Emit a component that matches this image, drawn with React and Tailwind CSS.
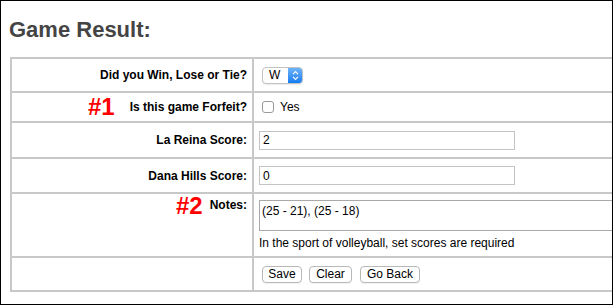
export default function App() {
  const line = 'border-[#c8c8c8]';
  const labelCell = 'w-[242px] shrink-0 border-r-2 border-[#c8c8c8] flex justify-end pr-[5px] text-[12px] leading-[14px] font-bold text-black';

  return (
    <div className="w-[613px] h-[305px] border border-black overflow-hidden bg-white font-['Liberation_Sans',Arial,sans-serif]">
      <h2 className="ml-[8px] mt-[16px] text-[22px] leading-[25px] font-bold text-[#444]">Game Result:</h2>

      {/* Result table, runs off the right edge */}
      <div className={`ml-[9px] mt-[15px] w-[700px] border-l-2 border-t-2 ${line}`}>
        <div className={`flex h-[34px] border-b-2 ${line}`}>
          <div className={`${labelCell} items-center`}>Did you Win, Lose or Tie?</div>
          <div className="flex-1 flex items-center pl-[5px]">
            <div className="ml-[3px] flex h-[17px] w-[41px] rounded-[4px] border border-[#c3c3c3] bg-white overflow-hidden shadow-[0_1px_1px_rgba(0,0,0,0.08)]">
              <span className="flex-1 pl-[6px] text-[12px] leading-[15px] text-black">W</span>
              <span className="w-[14px] bg-linear-to-b from-[#6cb3fa] to-[#0f7cf2] flex items-center justify-center">
                <svg width="7" height="11" viewBox="0 0 7 11">
                  <path d="M1 4.2 L3.5 1.7 L6 4.2 M1 6.8 L3.5 9.3 L6 6.8" stroke="white" strokeWidth="1.2" fill="none" />
                </svg>
              </span>
            </div>
          </div>
        </div>

        <div className={`flex h-[30px] border-b-2 ${line}`}>
          <div className={`${labelCell} items-center`}>
            <span className="mr-[15px] text-[24px] leading-[24px] text-[#ff0000]">#1</span>
            Is this game Forfeit?
          </div>
          <div className="flex-1 flex items-center pl-[5px] text-[12px] text-black">
            <span className="ml-[3px] w-[12px] h-[12px] rounded-[3px] border border-[#9a9a9a] bg-white"></span>
            <span className="ml-[6px]">Yes</span>
          </div>
        </div>

        <div className={`flex h-[36px] border-b-2 ${line}`}>
          <div className={`${labelCell} items-center`}>La Reina Score:</div>
          <div className="flex-1 flex items-center pl-[5px]">
            <input readOnly defaultValue="2" className="w-[256px] h-[19px] border border-[#c4c4c4] px-[3px] text-[12px] text-black outline-none" />
          </div>
        </div>

        <div className={`flex h-[35px] border-b-2 ${line}`}>
          <div className={`${labelCell} items-center`}>Dana Hills Score:</div>
          <div className="flex-1 flex items-center pl-[5px]">
            <input readOnly defaultValue="0" className="w-[256px] h-[19px] border border-[#c4c4c4] px-[3px] text-[12px] text-black outline-none" />
          </div>
        </div>

        <div className={`flex h-[64px] border-b-2 ${line}`}>
          <div className={`${labelCell} items-start`}>
            <span className="mr-[7px] text-[24px] leading-[24px] text-[#ff0000]">#2</span>
            <span className="mt-[4px]">Notes:</span>
          </div>
          <div className="flex-1 flex flex-col justify-center pl-[5px]">
            <textarea
              readOnly
              defaultValue="(25 - 21), (25 - 18)"
              className="block w-[420px] h-[31px] border border-[#a9a9a9] px-[2px] pt-[3px] text-[12px] leading-[14px] text-black resize-none outline-none"
            />
            <p className="mt-[5px] text-[12px] leading-[14px] text-black">In the sport of volleyball, set scores are required</p>
          </div>
        </div>

        <div className={`flex h-[34px] border-b-2 ${line}`}>
          <div className={labelCell}></div>
          <div className="flex-1 flex items-center pl-[5px]">
            <button className="ml-[3px] mr-[7px] w-[40px] h-[17px] border border-[#b8b8b8] rounded-[4px] bg-white text-[12px] leading-[15px] text-black shadow-[0_1px_1px_rgba(0,0,0,0.06)]">Save</button>
            <button className="mr-[8px] w-[43px] h-[17px] border border-[#b8b8b8] rounded-[4px] bg-white text-[12px] leading-[15px] text-black shadow-[0_1px_1px_rgba(0,0,0,0.06)]">Clear</button>
            <button className="w-[60px] h-[17px] border border-[#b8b8b8] rounded-[4px] bg-white text-[12px] leading-[15px] text-black shadow-[0_1px_1px_rgba(0,0,0,0.06)]">Go Back</button>
          </div>
        </div>
      </div>
    </div>
  );
}
